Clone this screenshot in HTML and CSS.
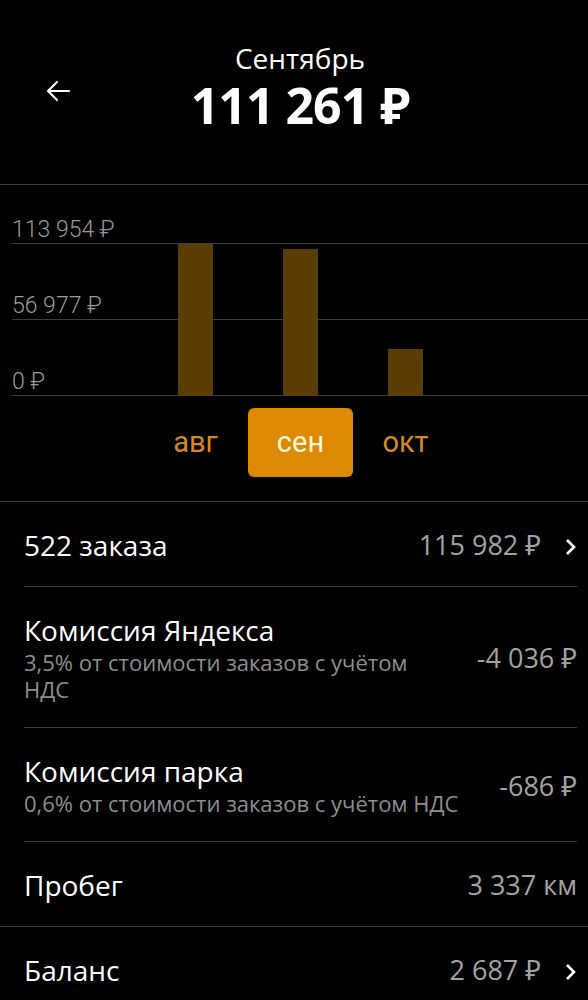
FILE: index.html
```html
<html>
<head>
  <link rel="stylesheet" href="styles.css">
</head>
<body>
  <div class="header">
    <div class="back">
      <svg width="26" height="22" viewBox="0 0 26 22">
        <path d="M24 11H3M12 2L3 11l9 9" fill="none" stroke="#fff" stroke-width="2.2" stroke-linecap="round" stroke-linejoin="round"/>
      </svg>
    </div>
    <div class="title-block">
      <div class="month">Сентябрь</div>
      <div class="total">111 261 ₽</div>
    </div>
  </div>

  <div class="chart">
    <div class="plot">
      <div class="grid">
        <div class="gridline first"><span>113 954 ₽</span></div>
        <div class="gridline"><span>56 977 ₽</span></div>
        <div class="gridline"><span>0 ₽</span></div>
      </div>
      <div class="bars">
        <div class="bar" style="height: 152px"></div>
        <div class="bar" style="height: 147px"></div>
        <div class="bar" style="height: 47px"></div>
      </div>
    </div>
    <div class="tabs">
      <div class="tab">авг</div>
      <div class="tab active">сен</div>
      <div class="tab">окт</div>
    </div>
  </div>

  <div class="list">
    <div class="row">
      <div class="info"><div class="name">522 заказа</div></div>
      <div class="value">115 982 ₽</div>
      <div class="chev"><svg width="12" height="18" viewBox="0 0 12 18"><path d="M2 2l7 7-7 7" fill="none" stroke="#fff" stroke-width="2.6"/></svg></div>
    </div>
    <div class="row">
      <div class="info">
        <div class="name">Комиссия Яндекса</div>
        <div class="note">3,5% от стоимости заказов с учётом НДС</div>
      </div>
      <div class="value">-4 036 ₽</div>
    </div>
    <div class="row">
      <div class="info">
        <div class="name">Комиссия парка</div>
        <div class="note">0,6% от стоимости заказов с учётом НДС</div>
      </div>
      <div class="value">-686 ₽</div>
    </div>
    <div class="row plain">
      <div class="info"><div class="name">Пробег</div></div>
      <div class="value">3 337 км</div>
    </div>
    <div class="row full">
      <div class="info"><div class="name">Баланс</div></div>
      <div class="value">2 687 ₽</div>
      <div class="chev"><svg width="12" height="18" viewBox="0 0 12 18"><path d="M2 2l7 7-7 7" fill="none" stroke="#fff" stroke-width="2.6"/></svg></div>
    </div>
  </div>
</body>
</html>
```

FILE: styles.css
```css
body {
  margin: 0;
  background: #000;
  color: #fff;
  font-family: "Open Sans", "Noto Sans", "DejaVu Sans", sans-serif;
}

.header {
  height: 184px;
  display: flex;
  border-bottom: 1px solid #3a3a3a;
}

.back {
  width: 46px;
  padding: 80px 0 0 45px;
}

.title-block {
  flex: 1;
  text-align: center;
  padding: 42px 79px 0 0;
}

.month {
  font-size: 28px;
  line-height: 32px;
}

.total {
  margin-top: 3px;
  font-size: 50px;
  font-weight: 700;
  line-height: 56px;
  letter-spacing: -1px;
}

.chart {
  border-bottom: 1px solid #3a3a3a;
  padding-bottom: 24px;
}

.plot {
  display: grid;
  margin-left: 12px;
  padding-top: 33px;
}

.grid, .bars {
  grid-area: 1 / 1;
}

.gridline {
  height: 75px;
  display: flex;
  align-items: flex-end;
  border-bottom: 1px solid #3d3d3d;
  font-family: Roboto, sans-serif;
  font-weight: 300;
  font-size: 23px;
  color: #9a9a9a;
}

.gridline span {
  line-height: 24px;
  padding-bottom: 1px;
}

.gridline.first {
  height: auto;
}

.bars {
  display: flex;
  align-items: flex-end;
  gap: 70px;
  padding-left: 166px;
}

.bar {
  width: 35px;
  background: #5a3d05;
}

.tabs {
  display: flex;
  padding-left: 143px;
  margin-top: 12px;
}

.tab {
  width: 105px;
  height: 69px;
  line-height: 69px;
  text-align: center;
  font-family: Roboto, sans-serif;
  font-size: 29px;
  color: #d48a22;
  border-radius: 6px;
}

.tab.active {
  background: #dd8a00;
  color: #fff5de;
}

.row {
  display: flex;
  align-items: center;
  margin: 0 11px 0 24px;
  padding: 26px 0 24px;
  border-bottom: 1px solid #3a3a3a;
}

.row.plain {
  border-bottom: none;
}

.row.full {
  margin: 0;
  padding: 26px 11px 24px 24px;
  border-bottom: none;
  border-top: 1px solid #3a3a3a;
}

.info {
  flex: 1;
  padding-right: 24px;
}

.name {
  font-size: 28px;
  line-height: 34px;
}

.note {
  margin-top: 2px;
  font-size: 22px;
  line-height: 27px;
  color: #8e8e8e;
}

.value {
  font-size: 27px;
  line-height: 32px;
  color: #a3a3a3;
}

.chev {
  margin-left: 24px;
  padding-top: 4px;
}
```
